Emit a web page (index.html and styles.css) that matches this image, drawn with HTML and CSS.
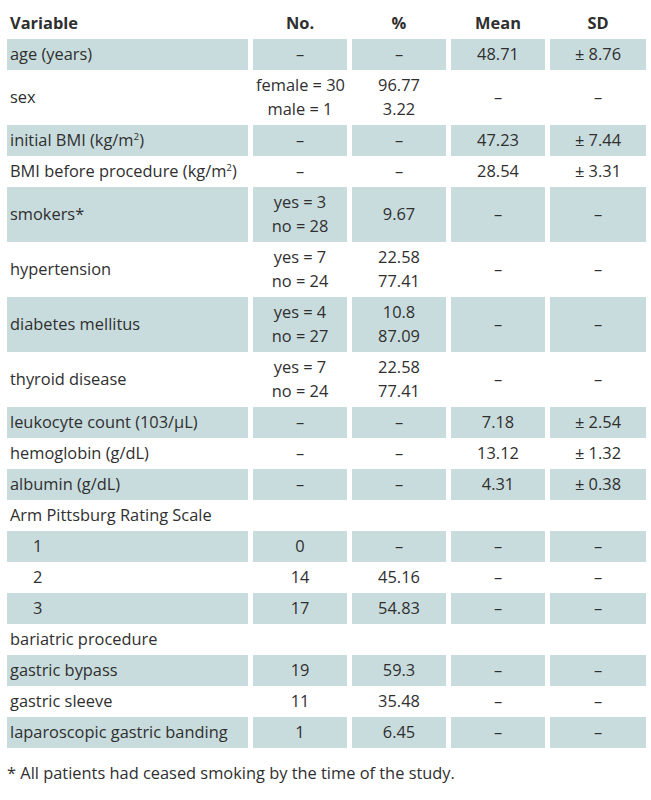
FILE: index.html
```html
<!DOCTYPE html>
<html>
<head>
<meta charset="utf-8">
<link rel="stylesheet" href="styles.css">
</head>
<body>
<div class="wrap">
<table class="data">
  <colgroup>
    <col class="c-var"><col class="c-num"><col class="c-num"><col class="c-num"><col class="c-sd">
  </colgroup>
  <thead>
    <tr><th class="left">Variable</th><th>No.</th><th>%</th><th>Mean</th><th>SD</th></tr>
  </thead>
  <tbody>
    <tr class="sh"><td class="left">age (years)</td><td>–</td><td>–</td><td>48.71</td><td>± 8.76</td></tr>
    <tr><td class="left">sex</td><td>female = 30<br>male = 1</td><td>96.77<br>3.22</td><td>–</td><td>–</td></tr>
    <tr class="sh"><td class="left">initial BMI (kg/m<sup>2</sup>)</td><td>–</td><td>–</td><td>47.23</td><td>± 7.44</td></tr>
    <tr><td class="left">BMI before procedure (kg/m<sup>2</sup>)</td><td>–</td><td>–</td><td>28.54</td><td>± 3.31</td></tr>
    <tr class="sh"><td class="left">smokers*</td><td>yes = 3<br>no = 28</td><td>9.67</td><td>–</td><td>–</td></tr>
    <tr><td class="left">hypertension</td><td>yes = 7<br>no = 24</td><td>22.58<br>77.41</td><td>–</td><td>–</td></tr>
    <tr class="sh"><td class="left">diabetes mellitus</td><td>yes = 4<br>no = 27</td><td>10.8<br>87.09</td><td>–</td><td>–</td></tr>
    <tr><td class="left">thyroid disease</td><td>yes = 7<br>no = 24</td><td>22.58<br>77.41</td><td>–</td><td>–</td></tr>
    <tr class="sh"><td class="left">leukocyte count (103/µL)</td><td>–</td><td>–</td><td>7.18</td><td>± 2.54</td></tr>
    <tr><td class="left">hemoglobin (g/dL)</td><td>–</td><td>–</td><td>13.12</td><td>± 1.32</td></tr>
    <tr class="sh"><td class="left">albumin (g/dL)</td><td>–</td><td>–</td><td>4.31</td><td>± 0.38</td></tr>
    <tr><td class="left" colspan="5">Arm Pittsburg Rating Scale</td></tr>
    <tr class="sh"><td class="left indent">1</td><td>0</td><td>–</td><td>–</td><td>–</td></tr>
    <tr><td class="left indent">2</td><td>14</td><td>45.16</td><td>–</td><td>–</td></tr>
    <tr class="sh"><td class="left indent">3</td><td>17</td><td>54.83</td><td>–</td><td>–</td></tr>
    <tr><td class="left" colspan="5">bariatric procedure</td></tr>
    <tr class="sh"><td class="left">gastric bypass</td><td>19</td><td>59.3</td><td>–</td><td>–</td></tr>
    <tr><td class="left">gastric sleeve</td><td>11</td><td>35.48</td><td>–</td><td>–</td></tr>
    <tr class="sh"><td class="left">laparoscopic gastric banding</td><td>1</td><td>6.45</td><td>–</td><td>–</td></tr>
  </tbody>
</table>
<p class="note">* All patients had ceased smoking by the time of the study.</p>
</div>
</body>
</html>
```
FILE: styles.css
```css
html, body {
  margin: 0;
  padding: 0;
  background: #ffffff;
}
body {
  font-family: "Open Sans", "Noto Sans", sans-serif;
  font-size: 16.4px;
  color: #2f2f2f;
}
.wrap {
  padding-top: 8px;
}
.data {
  margin-left: 2px;
  width: 649px;
  border-collapse: separate;
  border-spacing: 5px 0;
  table-layout: fixed;
}
.c-var { width: 241px; }
.c-num { width: 94px; }
.c-sd { width: 96px; }
.data th, .data td {
  padding: 3px 3px 4px 3px;
  height: 24px;
  line-height: 24px;
  text-align: center;
  vertical-align: middle;
  white-space: nowrap;
}
.data th {
  font-weight: bold;
}
.data .left {
  text-align: left;
}
.data .indent {
  padding-left: 26px;
}
.data tr.sh td {
  background: #c9dcdd;
}
.data sup {
  font-size: 0.6em;
  line-height: 0;
  vertical-align: 0.6em;
}
.note {
  margin: 13px 0 0 7px;
  line-height: 24px;
}
```
